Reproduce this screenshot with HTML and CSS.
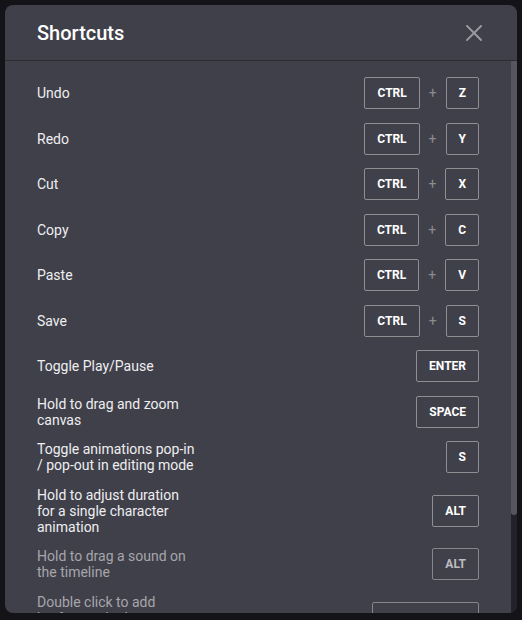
FILE: index.html
```html
<!DOCTYPE html>
<html lang="en">
<head>
<meta charset="utf-8">
<title>Shortcuts</title>
<link rel="stylesheet" href="styles.css">
</head>
<body>
<div class="modal" role="dialog" aria-labelledby="dlg-title">
  <header class="modal-header">
    <h2 class="title" id="dlg-title">Shortcuts</h2>
    <button class="close" type="button" aria-label="Close">
      <svg width="16" height="16" viewBox="0 0 16 16" fill="none" stroke="currentColor" stroke-width="1.9" stroke-linecap="square"><path d="M1 1 L15 15 M15 1 L1 15"/></svg>
    </button>
  </header>
  <div class="modal-main">
    <div class="modal-body">
      <ul class="list">
        <li class="row"><span class="label">Undo</span><span class="keys"><kbd class="key">CTRL</kbd><span class="plus">+</span><kbd class="key">Z</kbd></span></li>
        <li class="row"><span class="label">Redo</span><span class="keys"><kbd class="key">CTRL</kbd><span class="plus">+</span><kbd class="key">Y</kbd></span></li>
        <li class="row"><span class="label">Cut</span><span class="keys"><kbd class="key">CTRL</kbd><span class="plus">+</span><kbd class="key">X</kbd></span></li>
        <li class="row"><span class="label">Copy</span><span class="keys"><kbd class="key">CTRL</kbd><span class="plus">+</span><kbd class="key">C</kbd></span></li>
        <li class="row"><span class="label">Paste</span><span class="keys"><kbd class="key">CTRL</kbd><span class="plus">+</span><kbd class="key">V</kbd></span></li>
        <li class="row"><span class="label">Save</span><span class="keys"><kbd class="key">CTRL</kbd><span class="plus">+</span><kbd class="key">S</kbd></span></li>
        <li class="row"><span class="label">Toggle Play/Pause</span><span class="keys"><kbd class="key">ENTER</kbd></span></li>
        <li class="row"><span class="label">Hold to drag and zoom canvas</span><span class="keys"><kbd class="key">SPACE</kbd></span></li>
        <li class="row"><span class="label">Toggle animations pop-in / pop-out in editing mode</span><span class="keys"><kbd class="key">S</kbd></span></li>
        <li class="row"><span class="label">Hold to adjust duration for a single character animation</span><span class="keys"><kbd class="key">ALT</kbd></span></li>
        <li class="row disabled"><span class="label">Hold to drag a sound on the timeline</span><span class="keys"><kbd class="key">ALT</kbd></span></li>
        <li class="row disabled"><span class="label label-narrow">Double click to add keyframes in the timeline</span><span class="keys"><kbd class="key">DOUBLE CLICK</kbd></span></li>
      </ul>
    </div>
    <div class="scrollbar" aria-hidden="true"><div class="scroll-thumb"></div></div>
  </div>
</div>
</body>
</html>
```
FILE: styles.css
```css
html, body {
  margin: 0;
  height: 100%;
}

body {
  background: #141318;
  font-family: Roboto, "Liberation Sans", Arial, sans-serif;
  overflow: hidden;
}

.modal {
  margin: 5px 0 0 5px;
  width: 512px;
  height: 608px;
  background: #40404a;
  border-radius: 8px;
  display: flex;
  flex-direction: column;
  overflow: hidden;
}

.modal-header {
  flex: 0 0 55px;
  display: flex;
  align-items: center;
  justify-content: space-between;
  padding: 0 32px;
  border-bottom: 1px solid #2c2c33;
}

.title {
  margin: 0;
  font-size: 20px;
  font-weight: 500;
  color: #ffffff;
}

.close {
  width: 22px;
  height: 22px;
  padding: 0;
  border: 0;
  background: none;
  color: #9c9ca2;
  display: flex;
  align-items: center;
  justify-content: center;
  cursor: pointer;
}

.modal-main {
  flex: 1 1 auto;
  min-height: 0;
  display: flex;
}

.modal-body {
  flex: 1 1 auto;
  min-width: 0;
  overflow: hidden;
  padding: 16px 32px 90px 32px;
}

.scrollbar {
  flex: 0 0 6px;
  background: #22222a;
  display: flex;
  flex-direction: column;
}

.scroll-thumb {
  height: 454px;
  background: #55565e;
  border-radius: 0 0 3px 3px;
}

.list {
  list-style: none;
  margin: 0;
  padding: 0;
  display: flex;
  flex-direction: column;
  gap: 13.5px;
}

.row {
  display: flex;
  align-items: center;
  justify-content: space-between;
}

.label {
  max-width: 160px;
  font-size: 14px;
  line-height: 16px;
  color: #eeeef0;
}

.label-narrow {
  max-width: 140px;
}

.keys {
  display: flex;
  align-items: center;
}

.key {
  box-sizing: border-box;
  height: 32px;
  padding: 0 12px;
  display: flex;
  align-items: center;
  border: 1px solid #8e8e93;
  border-radius: 2px;
  font-family: Roboto, "Liberation Sans", Arial, sans-serif;
  font-size: 12px;
  font-weight: 700;
  color: #ffffff;
  white-space: nowrap;
}

.plus {
  margin: 0 9px;
  font-size: 14px;
  color: #8b8b90;
}

.row.disabled .label {
  color: #a6a6ab;
}

.row.disabled .key {
  color: #bdbdc1;
  border-color: #85858a;
}
```
